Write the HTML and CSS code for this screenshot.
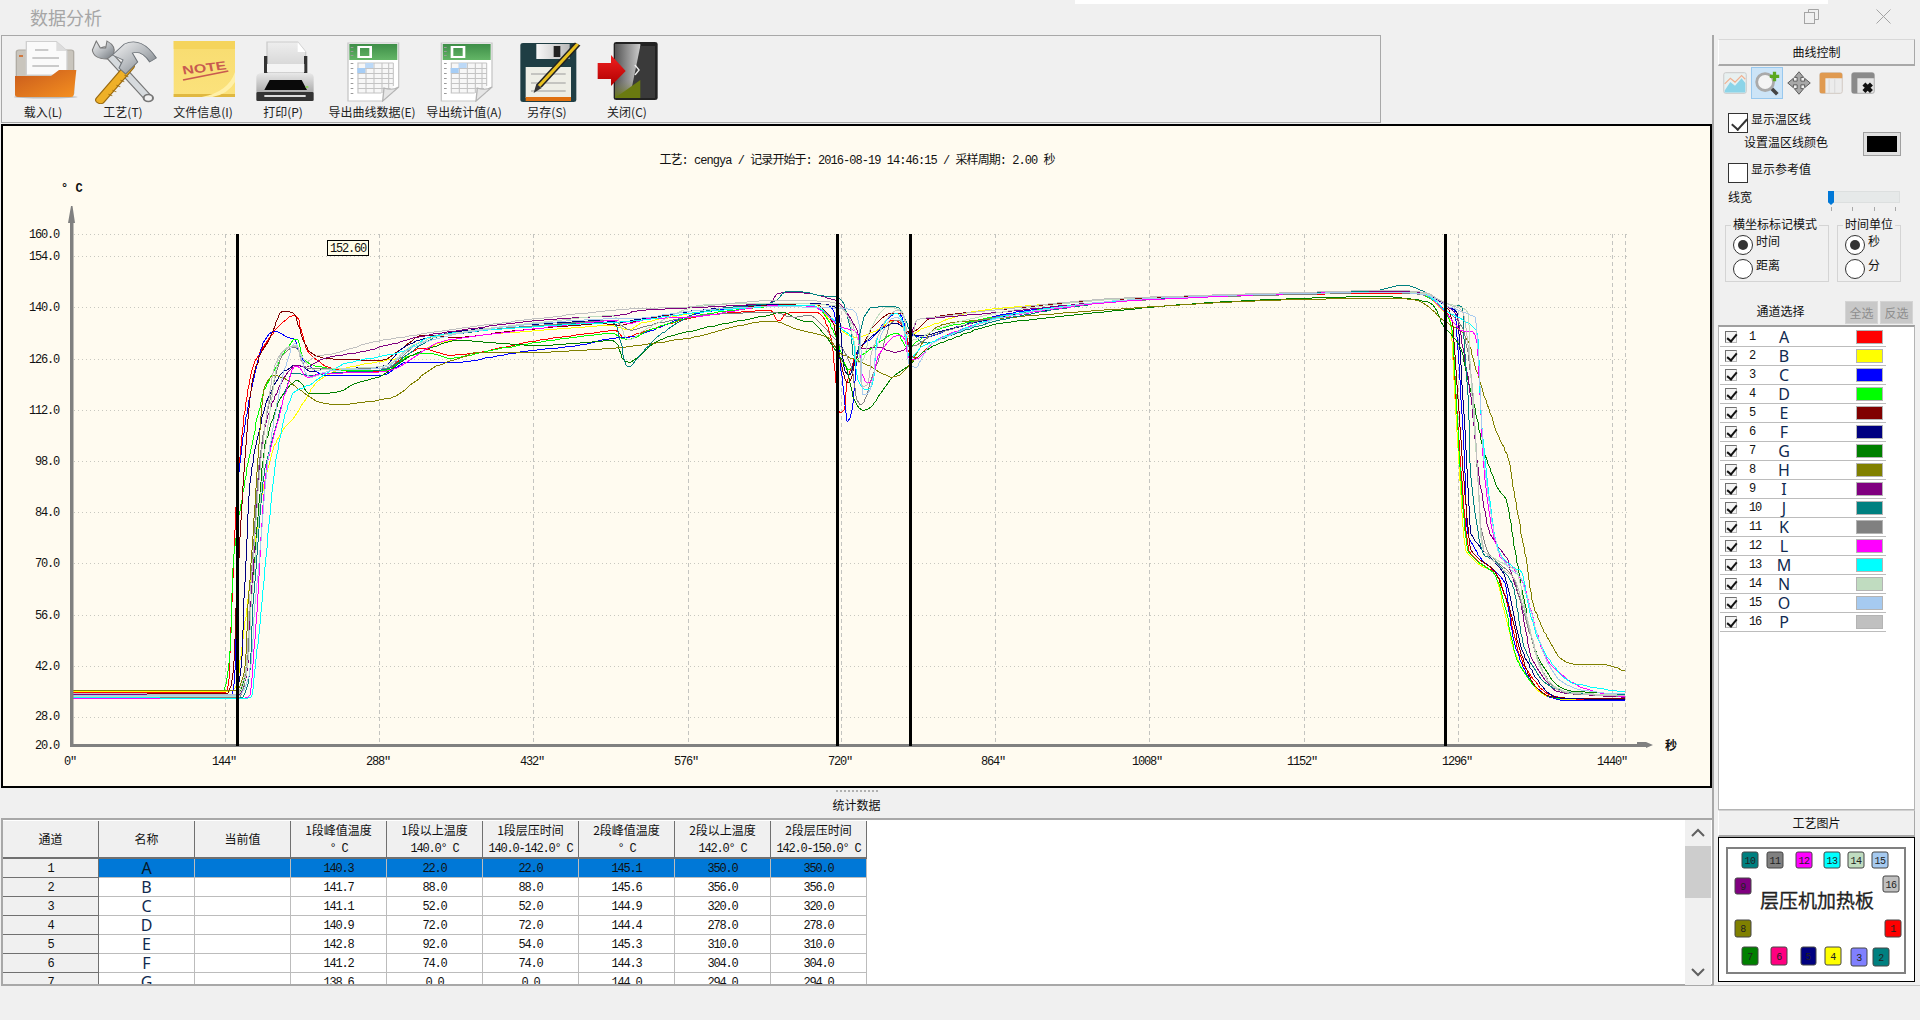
FILE: index.html
```html
<!DOCTYPE html>
<html lang="zh-CN">
<head>
<meta charset="utf-8">
<title>数据分析</title>
<link rel="stylesheet" href="styles.css">
</head>
<body>
<div class="app">
  <header class="titlebar">
    <div class="top-strip"></div>
    <span class="title">数据分析</span>
    <svg class="win-btn restore" viewBox="0 0 15 15"><path d="M4.5 3.5V.5h10v10h-4"/><rect x=".5" y="3.5" width="10" height="11"/></svg>
    <svg class="win-btn close" viewBox="0 0 15 15"><path d="M.5.5l14 14M14.5.5l-14 14"/></svg>
  </header>

  <main class="main">
    <section class="left">
      <nav class="toolbar">
        <div class="tool">
          <svg class="tool-icon" viewBox="2 38 60 66" preserveAspectRatio="none">
            <defs>
              <linearGradient id="gOrange" x1="0" y1="0" x2="1" y2="1"><stop offset="0" stop-color="#c85a1c"/><stop offset="1" stop-color="#f59020"/></linearGradient>
              <linearGradient id="gMetal" x1="0" y1="0" x2="1" y2="1"><stop offset="0" stop-color="#f4f4f4"/><stop offset=".5" stop-color="#b8bcc0"/><stop offset="1" stop-color="#70767c"/></linearGradient>
              <linearGradient id="gNote" x1="0" y1="0" x2="0" y2="1"><stop offset="0" stop-color="#f8dc70"/><stop offset="1" stop-color="#fbe27c"/></linearGradient>
              <linearGradient id="gPrinter" x1="0" y1="0" x2="0" y2="1"><stop offset="0" stop-color="#e8e8e8"/><stop offset="1" stop-color="#a4a4a4"/></linearGradient>
              <linearGradient id="gPaper" x1="0" y1="0" x2="0" y2="1"><stop offset="0" stop-color="#eeeeee"/><stop offset="1" stop-color="#cfcfcf"/></linearGradient>
              <linearGradient id="gGreen" x1="0" y1="0" x2="0" y2="1"><stop offset="0" stop-color="#3e8e48"/><stop offset="1" stop-color="#63b566"/></linearGradient>
              <linearGradient id="gDoor" x1="0" y1="0" x2="1" y2="0"><stop offset="0" stop-color="#555"/><stop offset="1" stop-color="#ccc"/></linearGradient>
              <linearGradient id="gDoorB" x1="0" y1="0" x2="0" y2="1"><stop offset="0" stop-color="#8a8a70" stop-opacity="0"/><stop offset="1" stop-color="#6a7a10"/></linearGradient>
              <linearGradient id="gRed" x1="0" y1="0" x2="0" y2="1"><stop offset="0" stop-color="#f02020"/><stop offset="1" stop-color="#b00000"/></linearGradient>
              <linearGradient id="gDisk" x1="0" y1="0" x2="1" y2="0"><stop offset="0" stop-color="#f8f8f8"/><stop offset="1" stop-color="#b8b8b8"/></linearGradient>
              <symbol id="sheet" viewBox="0 0 42 60">
                <path d="M1 1H39V45L27 59H1Z" fill="#fff" stroke="#c8c8c8"/>
                <rect x="2" y="2" width="36" height="16" fill="url(#gGreen)"/>
                <rect x="9" y="5" width="9" height="10" fill="none" stroke="#fff" stroke-width="2"/>
                <path d="M4 5v1M4 9v1M4 13v1M4 21v1M4 26v1M4 31v1M4 36v1M4 41v1M4 46v1M4 51v1" stroke="#9a9a9a" stroke-width="2"/>
                <rect x="8" y="21" width="27" height="30" fill="#f7f7f7"/>
                <path d="M8 21H35M8 26.500H35M8 31.500H35M8 36.500H35M8 41.500H35M8 46.500H33M8 51H26M8.500 21V51M14.500 21V51M20.500 21V51M26.500 21V51M31.500 21V46M35 21V44" stroke="#c4c4c4" fill="none" stroke-width=".8"/>
                <rect x="8" y="26" width="6" height="5" fill="#a6cdf5"/>
                <rect x="14" y="21" width="6" height="5" fill="#bcd9f7"/>
                <path d="M27 59L28 46Q34 49 39 45Z" fill="#e6e6e6" stroke="#b4b4b4"/>
              </symbol>
            </defs>
            <ellipse cx="34" cy="97" rx="24" ry="1.500" fill="#bbb"/>
            <rect x="12" y="50" width="43" height="45" rx="2" fill="#c9c5bd" stroke="#b0aca4"/>
            <rect x="14" y="55" width="3" height="2" fill="#d07840"/>
            <path d="M19.500 41.500H42L50 51V75H19.500Z" fill="#fafafa" stroke="#cfcfcf"/>
            <path d="M42 41.500V51H50Z" fill="#ddd"/>
            <path d="M26 50H36M24 58H44M24 66H44" stroke="#bbb" stroke-width="1.300"/>
            <path d="M11 76H38L44 70H57L55 95Q55 97 53 97H13Q11 97 11 95Z" fill="url(#gOrange)"/>
          </svg>
          <span class="tool-label">载入(L)</span>
        </div>
        <div class="tool">
          <svg class="tool-icon" viewBox="62 38 60 66" preserveAspectRatio="none">
            <path d="M78 50L111 98" stroke="#777" stroke-width="7" stroke-linecap="round"/>
            <path d="M78 50L111 98" stroke="#d6dadd" stroke-width="5" stroke-linecap="round"/>
            <path d="M72 41L69 50Q70 59 80 59L85 54Q87 46 80 41L79 48L75 48Z" fill="url(#gMetal)" stroke="#777" stroke-width=".8"/>
            <circle cx="111" cy="98" r="3.500" fill="#f0f0f0" stroke="#777" stroke-width="1.500"/>
            <path d="M97 66L75 100" stroke="#9a6a10" stroke-width="8" stroke-linecap="round"/>
            <path d="M97 66L75 100" stroke="#eeb028" stroke-width="6" stroke-linecap="round"/>
            <path d="M81 94l3 2M84 90l3 2M87 85l3 2M90 80l3 2M93 75l3 2" stroke="#9a6a10" stroke-width=".8"/>
            <path d="M84 55L93 44Q106 36 117 58L112 62Q106 50 99 53L103 62L94 74L89 68L92 60Z" fill="url(#gMetal)" stroke="#6c7278" stroke-width=".8"/>
          </svg>
          <span class="tool-label">工艺(T)</span>
        </div>
        <div class="tool">
          <svg class="tool-icon" viewBox="121 38 60 66" preserveAspectRatio="none">
            <rect x="129" y="41" width="46" height="56" fill="url(#gNote)"/>
            <rect x="129" y="41" width="46" height="8" fill="#f5d45c"/>
            <rect x="129" y="94" width="46" height="3" fill="#e0b840"/>
            <text class="note-text" x="152" y="72" transform="rotate(-9 152 68)">NOTE</text>
            <path d="M136 80L170 71" stroke="#c85a50" stroke-width="1.500"/>
            <path d="M150 97Q170 92 175 72V82Q170 94 158 97Z" fill="#fff0a8"/>
          </svg>
          <span class="tool-label">文件信息(I)</span>
        </div>
        <div class="tool">
          <svg class="tool-icon" viewBox="181 38 60 66" preserveAspectRatio="none">
            <path d="M199 42H222L228 52V74H199Z" fill="url(#gPaper)" stroke="#ccc"/>
            <path d="M222 42V52H228Z" fill="#fff"/>
            <path d="M198 56V74M228 56V74" stroke="#333" stroke-width="2.500"/>
            <rect x="199" y="64" width="28" height="8" fill="#f4f4f4"/>
            <rect x="191" y="73" width="43" height="22" rx="4" fill="url(#gPrinter)"/>
            <path d="M197 90L201 80H225L229 90Z" fill="#0a0a0a"/>
            <rect x="191" y="92" width="43" height="9" rx="1" fill="#333"/>
            <rect x="197" y="95" width="31" height="2" fill="#ddd"/>
            <rect x="228" y="86" width="2" height="2" fill="#8cd060"/>
          </svg>
          <span class="tool-label">打印(P)</span>
        </div>
        <div class="tool">
          <svg class="tool-icon" viewBox="247 38 60 66" preserveAspectRatio="none"><use href="#sheet" x="258" y="42" width="42" height="60"/></svg>
          <span class="tool-label">导出曲线数据(E)</span>
        </div>
        <div class="tool">
          <svg class="tool-icon" viewBox="315 38 60 66" preserveAspectRatio="none"><use href="#sheet" x="327" y="42" width="42" height="60"/></svg>
          <span class="tool-label">导出统计值(A)</span>
        </div>
        <div class="tool">
          <svg class="tool-icon" viewBox="378 38 60 66" preserveAspectRatio="none">
            <rect x="388" y="43" width="42" height="59" rx="2" fill="#1f3e44"/>
            <rect x="400" y="44" width="25" height="15" fill="url(#gDisk)"/>
            <rect x="413" y="46" width="5" height="11" fill="#222"/>
            <rect x="392" y="67" width="34" height="31" fill="#eeeee6"/>
            <path d="M396 74H422M396 83H422M396 91H422" stroke="#999" stroke-width="1"/>
            <rect x="392" y="97" width="34" height="4" fill="#e07010"/>
            <path d="M431 44L402 86" stroke="#222" stroke-width="5"/>
            <path d="M431 44L402 86" stroke="#e8c020" stroke-width="2.500"/>
            <path d="M400 84L404 88L398 93Z" fill="#333"/>
          </svg>
          <span class="tool-label">另存(S)</span>
        </div>
        <div class="tool">
          <svg class="tool-icon" viewBox="438 38 60 66" preserveAspectRatio="none">
            <rect x="458" y="42" width="33" height="58" rx="2" fill="#222"/>
            <path d="M459 44H478V98H459Z" fill="url(#gDoor)"/>
            <path d="M459 80H478V98H459Z" fill="url(#gDoorB)"/>
            <path d="M478 46H489V98H470Z" fill="#3a3a3a"/>
            <path d="M459 98L478 80V98Z" fill="#6a7a10"/>
            <path d="M474 65L477 70L474 75" stroke="#eee" fill="none" stroke-width="1.200"/>
            <path d="M446 63H456V55L467 71L456 86V79H446Z" fill="url(#gRed)"/>
          </svg>
          <span class="tool-label">关闭(C)</span>
        </div>
      </nav>

      <figure class="chart-panel">
        <svg class="chart" viewBox="3 126 1707 660">
          <text class="chart-title" x="857" y="164">工艺: cengya / 记录开始于: 2016-08-19 14:46:15 / 采样周期: 2.00 秒</text>
          <text class="unit" x="61" y="192">° C</text>

          <g class="grid-h">
            <path d="M74 234.500H1627M74 256.500H1627M74 307.500H1627M74 359.500H1627M74 410.500H1627M74 461.500H1627M74 512.500H1627M74 563.500H1627M74 615.500H1627M74 666.500H1627M74 717.500H1627"/>
          </g>
          <g class="grid-v">
            <path d="M225.500 234V745M379.500 234V745M533.500 234V745M688.500 234V745M841.500 234V745M995.500 234V745M1149.500 234V745M1304.500 234V745M1458.500 234V745M1612.500 234V745M1625.500 234V745"/>
          </g>

          <g class="axis-y">
            <text x="59" y="238">160.0</text><text x="59" y="260">154.0</text><text x="59" y="311">140.0</text><text x="59" y="363">126.0</text><text x="59" y="414">112.0</text><text x="59" y="465">98.0</text><text x="59" y="516">84.0</text><text x="59" y="567">70.0</text><text x="59" y="619">56.0</text><text x="59" y="670">42.0</text><text x="59" y="720">28.0</text><text x="59" y="749">20.0</text>
          </g>
          <g class="axis-x">
            <text x="70" y="765">0″</text><text x="224" y="765">144″</text><text x="378" y="765">288″</text><text x="532" y="765">432″</text><text x="686" y="765">576″</text><text x="840" y="765">720″</text><text x="993" y="765">864″</text><text x="1147" y="765">1008″</text><text x="1302" y="765">1152″</text><text x="1457" y="765">1296″</text><text x="1612" y="765">1440″</text>
          </g>

          <g class="curves">
            <polyline class="c01" points="72,692 226,692 230,640 235,520 239,465 243,423 250,377 257,358 270,337 283,322 295,315 300,327 307,350 317,360 328,367 350,371 387,371 400,360 420,348 433,351 447,355 480,352 540,340 600,332 615,330 625,338 640,333 700,316 770,310 778,321 787,313 817,312 830,335 835,375 840,413 847,383 858,350 873,337 893,320 905,330 908,350 916,358 940,338 1000,318 1100,303 1200,297 1300,294 1380,293 1423,294 1445,310 1450,320 1456,403 1462,487 1468,547 1480,563 1497,575 1508,607 1517,647 1527,670 1545,692 1565,698 1625,700"/>
            <polyline class="c02" points="72,691 230,691 240,660 250,580 258,520 265,480 277,440 297,413 313,387 327,375 350,367 387,360 413,355 440,343 480,335 540,330 610,325 628,330 645,322 700,312 770,303 813,303 830,320 845,333 857,337 873,332 897,320 908,337 920,330 967,313 1000,308 1100,300 1200,295 1300,293 1380,291 1423,295 1440,308 1450,320 1455,403 1460,487 1465,547 1477,563 1495,575 1503,607 1513,647 1523,670 1540,692 1560,699 1625,700"/>
            <polyline class="c03" points="72,695 232,695 236,600 238,480 250,395 263,343 275,331 287,337 295,340 303,360 317,372 327,375 383,375 407,362 460,362 520,352 580,345 612,338 640,335 700,313 770,305 813,303 833,310 840,363 847,422 852,410 858,350 873,337 897,313 908,333 927,337 1000,315 1100,302 1200,296 1300,293 1380,291 1423,293 1445,305 1455,313 1463,437 1467,530 1480,557 1493,570 1505,583 1513,637 1527,675 1543,693 1560,700 1625,700"/>
            <polyline class="c04" points="72,690 224,690 233,562 245,480 262,397 272,375 295,339 303,358 313,365 340,370 387,370 407,357 427,353 447,358 460,357 520,345 590,335 612,333 628,340 650,330 700,315 770,306 813,305 833,330 848,370 860,357 883,340 897,333 908,347 935,330 1000,316 1100,302 1200,296 1300,293 1380,292 1423,295 1445,312 1452,330 1456,403 1461,487 1467,547 1478,562 1495,575 1505,607 1514,650 1524,672 1541,692 1560,698 1625,698"/>
            <polyline class="c05" points="72,693 228,693 236,600 243,480 250,395 260,355 270,338 280,313 287,311 295,315 302,337 310,352 320,357 337,359 383,360 400,350 423,335 460,337 520,330 600,323 620,325 640,320 700,310 770,305 813,303 833,323 847,383 857,357 873,327 890,313 903,313 910,333 933,317 993,310 1100,300 1200,296 1300,293 1380,290 1423,293 1445,305 1452,320 1458,403 1464,487 1470,547 1480,560 1495,572 1510,610 1520,650 1533,683 1553,697 1625,698"/>
            <polyline class="c06" points="72,696 235,696 244,590 250,480 265,407 280,375 287,370 295,365 303,367 313,372 327,368 383,366 403,348 427,338 460,331 520,325 600,320 620,322 645,318 700,310 770,304 813,303 837,310 843,363 850,375 858,350 880,330 897,323 908,333 927,335 1000,317 1100,303 1200,296 1300,293 1380,291 1423,293 1445,305 1457,313 1465,437 1470,530 1480,547 1493,560 1505,577 1520,643 1533,673 1547,692 1560,698 1625,699"/>
            <polyline class="c07" points="72,694 238,694 250,610 263,457 278,403 288,388 297,380 303,385 308,393 337,392 357,383 383,375 407,358 433,347 460,340 540,345 612,340 628,362 660,340 700,329 733,322 770,315 783,312 800,320 813,322 830,342 847,370 853,397 862,410 873,405 890,380 907,367 930,348 967,333 1000,323 1100,312 1200,303 1300,298 1380,296 1430,303 1443,325 1460,347 1473,400 1483,447 1497,487 1507,503 1517,563 1533,643 1550,677 1567,690 1625,694"/>
            <polyline class="c08" points="72,690 238,690 248,600 257,467 263,393 273,375 287,380 307,395 323,403 347,404 393,397 413,383 433,368 460,358 480,352 540,352 612,348 640,345 700,336 733,327 770,321 800,330 827,337 840,353 857,360 873,368 893,377 908,367 917,353 937,327 977,320 1100,310 1224,302 1300,299 1380,298 1400,298 1423,303 1443,320 1463,333 1470,347 1480,382 1497,433 1508,458 1513,487 1526,560 1533,603 1547,637 1560,658 1573,664 1603,664 1625,671"/>
            <polyline class="c09" points="72,694 240,694 250,610 258,480 265,427 280,385 295,365 307,367 320,360 333,356 360,352 400,342 417,337 460,330 540,320 620,315 640,310 700,307 770,303 778,293 800,292 827,298 838,302 847,313 857,330 860,348 880,347 893,352 907,347 917,320 930,318 1000,312 1100,302 1200,296 1300,293 1380,291 1423,292 1445,305 1457,317 1470,393 1477,463 1485,513 1492,537 1508,560 1510,570 1520,600 1530,653 1543,677 1560,692 1625,697"/>
            <polyline class="c10" points="72,697 243,697 253,600 263,480 277,423 290,375 295,373 310,375 340,372 387,369 407,355 433,338 460,333 540,325 612,322 620,340 628,367 640,355 660,335 700,312 770,303 787,291 800,291 817,295 840,299 850,327 855,357 860,333 870,308 893,306 903,313 910,330 927,343 1000,320 1100,303 1200,296 1300,293 1380,290 1403,285 1423,291 1445,303 1453,305 1462,307 1463,330 1468,403 1470,470 1477,527 1483,553 1497,563 1513,587 1523,643 1537,673 1553,688 1580,693 1625,694"/>
            <polyline class="c11" points="72,697 240,697 250,590 258,473 267,413 280,360 295,347 307,368 333,368 387,368 400,358 427,338 460,332 540,325 612,320 630,330 650,325 700,315 770,312 793,317 810,315 833,337 850,363 860,405 870,383 883,347 897,320 910,347 933,335 1000,316 1100,303 1200,297 1300,294 1380,292 1423,295 1445,310 1462,327 1470,370 1475,437 1480,520 1487,550 1503,567 1513,577 1523,610 1537,657 1550,683 1567,693 1625,696"/>
            <polyline class="c12" points="72,698 245,698 250,695 256,620 265,477 280,413 290,377 297,366 307,377 327,373 387,371 407,362 433,345 460,338 540,328 612,320 630,323 650,318 700,316 772,305 813,306 840,327 857,333 867,383 880,353 900,335 913,360 940,338 1000,318 1100,303 1200,297 1300,293 1380,292 1423,294 1445,312 1460,330 1473,332 1477,347 1480,403 1483,460 1490,520 1500,557 1508,563 1523,583 1540,643 1553,667 1577,685 1597,692 1625,697"/>
            <polyline class="c13" points="72,697 248,698 252,695 260,620 273,480 283,423 293,393 303,388 313,383 327,373 347,363 387,355 407,350 427,338 460,332 540,326 612,322 640,320 700,312 770,306 813,305 843,330 853,340 867,390 877,340 897,313 910,358 925,345 1000,317 1100,302 1200,296 1300,293 1380,292 1423,293 1445,310 1463,320 1477,333 1480,403 1483,443 1492,520 1500,553 1513,567 1522,573 1537,637 1563,677 1587,686 1625,692"/>
            <polyline class="c14" points="72,696 238,696 252,590 263,467 275,373 283,352 295,345 303,358 315,370 340,368 387,365 413,345 460,332 540,322 612,315 628,340 645,330 700,305 770,303 840,307 853,337 860,363 870,330 887,307 903,313 910,340 943,327 1000,312 1100,300 1200,295 1300,293 1380,292 1423,293 1445,303 1460,307 1468,313 1470,370 1477,470 1482,547 1503,563 1517,572 1527,617 1540,667 1557,688 1587,693 1625,695"/>
            <polyline class="c15" points="72,695 240,695 255,600 267,467 280,387 290,352 295,343 302,360 310,377 333,370 385,367 413,347 460,333 540,323 612,318 640,318 700,310 770,306 813,307 853,310 860,337 863,395 877,347 897,317 908,363 917,367 933,343 1000,318 1100,302 1200,296 1300,293 1380,292 1423,294 1445,305 1470,315 1475,317 1478,353 1483,453 1490,510 1497,547 1508,567 1522,580 1537,633 1550,667 1567,685 1597,692 1625,693"/>
            <polyline class="c16" points="72,693 238,694 250,590 260,467 272,377 280,355 295,346 303,363 317,356 340,352 373,342 427,333 460,328 540,318 612,310 640,308 700,306 770,300 833,302 857,337 863,387 873,347 897,310 910,337 917,320 933,317 993,310 1100,299 1200,295 1300,292 1380,290 1423,292 1445,303 1463,313 1472,387 1478,487 1483,547 1500,567 1515,580 1527,620 1540,665 1555,688 1585,694 1625,695"/>
          </g>

          <path class="axis-shape" d="M70 745V223H68L71 206L72.500 206L75 223H73.500V744H1637V742H1646L1653 745L1646 748V747H70Z"/>
          <g class="markers">
            <path d="M237.500 234V746M837.500 234V746M910.500 234V746M1445.500 234V746"/>
          </g>
          <rect class="tip-box" x="327.500" y="240.500" width="41" height="15"/>
          <text class="tip-text" x="348" y="252">152.60</text>
          <text class="sec" x="1671" y="750">秒</text>
        </svg>
      </figure>

      <div class="stats-head">
        <span class="grip"></span>
        <span class="stats-title">统计数据</span>
      </div>

      <div class="table-wrap">
        <div class="table-clip">
          <table class="stats">
            <thead>
              <tr>
                <th><span class="cjk">通道</span></th>
                <th><span class="cjk">名称</span></th>
                <th><span class="cjk">当前值</span></th>
                <th><span class="cjk">1段峰值温度</span><span class="sub">° C</span></th>
                <th><span class="cjk">1段以上温度</span><span class="sub">140.0° C</span></th>
                <th><span class="cjk">1段层压时间</span><span class="sub">140.0-142.0° C</span></th>
                <th><span class="cjk">2段峰值温度</span><span class="sub">° C</span></th>
                <th><span class="cjk">2段以上温度</span><span class="sub">142.0° C</span></th>
                <th><span class="cjk">2段层压时间</span><span class="sub">142.0-150.0° C</span></th>
              </tr>
            </thead>
            <tbody>
              <tr class="selected"><th>1</th><td class="letter">A</td><td></td><td>140.3</td><td>22.0</td><td>22.0</td><td>145.1</td><td>350.0</td><td>350.0</td></tr>
              <tr><th>2</th><td class="letter">B</td><td></td><td>141.7</td><td>88.0</td><td>88.0</td><td>145.6</td><td>356.0</td><td>356.0</td></tr>
              <tr><th>3</th><td class="letter">C</td><td></td><td>141.1</td><td>52.0</td><td>52.0</td><td>144.9</td><td>320.0</td><td>320.0</td></tr>
              <tr><th>4</th><td class="letter">D</td><td></td><td>140.9</td><td>72.0</td><td>72.0</td><td>144.4</td><td>278.0</td><td>278.0</td></tr>
              <tr><th>5</th><td class="letter">E</td><td></td><td>142.8</td><td>92.0</td><td>54.0</td><td>145.3</td><td>310.0</td><td>310.0</td></tr>
              <tr><th>6</th><td class="letter">F</td><td></td><td>141.2</td><td>74.0</td><td>74.0</td><td>144.3</td><td>304.0</td><td>304.0</td></tr>
              <tr><th>7</th><td class="letter">G</td><td></td><td>138.6</td><td>0.0</td><td>0.0</td><td>144.0</td><td>294.0</td><td>294.0</td></tr>
            </tbody>
          </table>
        </div>
        <div class="scrollbar">
          <svg class="chev" viewBox="0 0 26 26"><path d="M7 16l6-6 6 6"/></svg>
          <div class="thumb"></div>
          <div class="track"></div>
          <svg class="chev" viewBox="0 0 26 26"><path d="M7 10l6 6 6-6"/></svg>
        </div>
      </div>
    </section>

    <aside class="side">
      <div class="side-head">曲线控制</div>
      <div class="icon-row">
        <button class="icon-btn">
          <svg viewBox="0 0 32 32"><rect x="4" y="5" width="24" height="22" rx="2" fill="#e8f0f0" stroke="#c8c8c8"/><path d="M5 24L11 15L16 19L23 11L27 16V26H5Z" fill="#8cd4e8"/><path d="M5 17L11 11L16 15L23 8L27 12" fill="none" stroke="#f0b090" stroke-width="1.300"/></svg>
        </button>
        <button class="icon-btn active">
          <svg viewBox="0 0 32 32"><path d="M19 20L27 28" stroke="#444" stroke-width="4"/><circle cx="14" cy="15" r="9" fill="#f4f4f4" stroke="#aaa" stroke-width="3"/><path d="M24 4v10M19 9h10" stroke="#5aa820" stroke-width="3.500"/></svg>
        </button>
        <button class="icon-btn">
          <svg viewBox="0 0 32 32"><path d="M16 4l5 6h-3v4h4v-3l6 5-6 5v-3h-4v4h3l-5 6-5-6h3v-4h-4v3l-6-5 6-5v3h4v-4h-3z" fill="#a8a8a8" stroke="#555"/></svg>
        </button>
        <button class="icon-btn">
          <svg viewBox="0 0 32 32"><rect x="4" y="5" width="24" height="22" rx="2" fill="#ececec" stroke="#d0c8c0"/><path d="M14 12v15M20 12v15" stroke="#d8d8d8"/><path d="M4 7Q4 5 6 5H26Q28 5 28 7V11H10V27H6Q4 27 4 25Z" fill="#e09a50"/></svg>
        </button>
        <button class="icon-btn">
          <svg viewBox="0 0 32 32"><rect x="4" y="5" width="24" height="22" rx="2" fill="#e4e4e4" stroke="#aaa"/><path d="M4 7Q4 5 6 5H26Q28 5 28 7V11H10V27H6Q4 27 4 25Z" fill="#8a8a8a"/><path d="M17 17l8 8M25 17l-8 8" stroke="#111" stroke-width="4.500"/></svg>
        </button>
      </div>

      <label class="check-row first"><span class="check on"></span>显示温区线</label>
      <div class="color-row"><span class="color-label">设置温区线颜色</span><span class="color-well"><span class="color-fill"></span></span></div>
      <label class="check-row second"><span class="check"></span>显示参考值</label>
      <div class="width-row">
        <span class="width-label">线宽</span>
        <div class="slider">
          <div class="slider-track"><span class="slider-thumb"></span></div>
          <div class="slider-ticks"><i></i><i></i><i></i><i></i></div>
        </div>
      </div>

      <div class="groups">
        <fieldset class="group mode">
          <legend>横坐标标记模式</legend>
          <label class="radio-row"><span class="radio on"></span>时间</label>
          <label class="radio-row"><span class="radio"></span>距离</label>
        </fieldset>
        <fieldset class="group unit-box">
          <legend>时间单位</legend>
          <label class="radio-row"><span class="radio on"></span>秒</label>
          <label class="radio-row"><span class="radio"></span>分</label>
        </fieldset>
      </div>

      <div class="channel-head">
        <span class="channel-title">通道选择</span>
        <span class="mini-btn">全选</span>
        <span class="mini-btn">反选</span>
      </div>
      <ul class="channels">
        <li><span class="cb"></span><span class="num">1</span><span class="name">A</span><span></span><span class="swatch s01"></span></li>
        <li><span class="cb"></span><span class="num">2</span><span class="name">B</span><span></span><span class="swatch s02"></span></li>
        <li><span class="cb"></span><span class="num">3</span><span class="name">C</span><span></span><span class="swatch s03"></span></li>
        <li><span class="cb"></span><span class="num">4</span><span class="name">D</span><span></span><span class="swatch s04"></span></li>
        <li><span class="cb"></span><span class="num">5</span><span class="name">E</span><span></span><span class="swatch s05"></span></li>
        <li><span class="cb"></span><span class="num">6</span><span class="name">F</span><span></span><span class="swatch s06"></span></li>
        <li><span class="cb"></span><span class="num">7</span><span class="name">G</span><span></span><span class="swatch s07"></span></li>
        <li><span class="cb"></span><span class="num">8</span><span class="name">H</span><span></span><span class="swatch s08"></span></li>
        <li><span class="cb"></span><span class="num">9</span><span class="name">I</span><span></span><span class="swatch s09"></span></li>
        <li><span class="cb"></span><span class="num">10</span><span class="name">J</span><span></span><span class="swatch s10"></span></li>
        <li><span class="cb"></span><span class="num">11</span><span class="name">K</span><span></span><span class="swatch s11"></span></li>
        <li><span class="cb"></span><span class="num">12</span><span class="name">L</span><span></span><span class="swatch s12"></span></li>
        <li><span class="cb"></span><span class="num">13</span><span class="name">M</span><span></span><span class="swatch s13"></span></li>
        <li><span class="cb"></span><span class="num">14</span><span class="name">N</span><span></span><span class="swatch s14"></span></li>
        <li><span class="cb"></span><span class="num">15</span><span class="name">O</span><span></span><span class="swatch s15"></span></li>
        <li><span class="cb"></span><span class="num">16</span><span class="name">P</span><span></span><span class="swatch s16"></span></li>
      </ul>

      <div class="side-head pic-head">工艺图片</div>
      <div class="pic-box">
        <svg class="pic" viewBox="1719 837 195 143">
          <rect class="pic-frame" x="1727" y="847" width="178" height="125"/>
          <text class="pic-title" x="1817" y="907">层压机加热板</text>
          <g class="pads">
            <rect class="pad s10f" x="1742" y="851" width="16" height="16" rx="2"/><text x="1750" y="863">10</text>
            <rect class="pad s11f" x="1767" y="851" width="16" height="16" rx="2"/><text x="1775" y="863">11</text>
            <rect class="pad s12f" x="1796" y="851" width="16" height="16" rx="2"/><text x="1804" y="863">12</text>
            <rect class="pad s13f" x="1824" y="851" width="16" height="16" rx="2"/><text x="1832" y="863">13</text>
            <rect class="pad s14f" x="1848" y="851" width="16" height="16" rx="2"/><text x="1856" y="863">14</text>
            <rect class="pad s15f" x="1872" y="851" width="16" height="16" rx="2"/><text x="1880" y="863">15</text>
            <rect class="pad s09f" x="1735" y="877" width="16" height="16" rx="2"/><text x="1743" y="889">9</text>
            <rect class="pad s16f" x="1883" y="875" width="16" height="16" rx="2"/><text x="1891" y="887">16</text>
            <rect class="pad s08f" x="1735" y="919" width="16" height="17" rx="2"/><text x="1743" y="931">8</text>
            <rect class="pad s01f" x="1885" y="919" width="16" height="17" rx="2"/><text x="1893" y="931">1</text>
            <rect class="pad s07f" x="1742" y="946" width="16" height="18" rx="2"/><text x="1750" y="959">7</text>
            <rect class="pad s06x" x="1771" y="946" width="16" height="18" rx="2"/><text x="1779" y="959">6</text>
            <rect class="pad s06f" x="1801" y="946" width="15" height="18" rx="2"/><text x="1808" y="959">5</text>
            <rect class="pad s02f" x="1825" y="946" width="16" height="18" rx="2"/><text x="1833" y="959">4</text>
            <rect class="pad s03x" x="1851" y="947" width="16" height="18" rx="2"/><text x="1859" y="960">3</text>
            <rect class="pad s10f" x="1873" y="947" width="16" height="18" rx="2"/><text x="1881" y="960">2</text>
          </g>
        </svg>
      </div>
    </aside>
  </main>
</div>
<script src="curves.js"></script>
</body>
</html>
```
FILE: styles.css
```css
* { box-sizing: border-box; }
html, body { margin: 0; padding: 0; height: 100%; }
body {
  background: #f0f0f0;
  color: #111;
  font: 12px "Noto Sans CJK SC", "Liberation Sans", sans-serif;
  overflow: hidden;
}
.app { width: 1920px; height: 1020px; display: flex; flex-direction: column; }

/* title bar */
.titlebar { position: relative; height: 35px; display: flex; align-items: center; padding: 0 29px 0 30px; flex: none; }
.top-strip { position: absolute; left: 1075px; top: 0; width: 753px; height: 4px; background: #fff; }
.title { font-size: 18px; line-height: 35px; color: #a6a6a6; margin-top: -1px; }
.win-btn { width: 15px; height: 15px; fill: #f0f0f0; stroke: #a4a4a4; stroke-width: 1; margin-top: -2px; }
.restore { margin-left: auto; }
.close { margin-left: 57px; }

.main { display: grid; grid-template-columns: 1712px 208px; flex: none; height: 951px; }
.left { padding-left: 1px; display: flex; flex-direction: column; }

/* toolbar */
.toolbar {
  width: 1380px; height: 88px; flex: none;
  border: 1px solid #a8a8a8;
  display: grid;
  grid-template-columns: 82px 78px 82px 78px 100px 84px 82px 78px;
  justify-content: start;
  padding-top: 2px;
}
.tool { display: flex; flex-direction: column; align-items: center; min-width: 0; }
.tool-icon { width: 80px; height: 66px; flex: none; }
.tool-label { font-size: 12px; line-height: 15px; white-space: nowrap; color: #222; }
.note-text { font: bold 12px "Liberation Sans", sans-serif; fill: #c85a50; text-anchor: middle; }

/* chart */
.chart-panel { margin: 1px 0 0; width: 1711px; height: 664px; border: 2px solid #000; background: #fffbf0; flex: none; }
.chart { display: block; width: 1707px; height: 660px; }
.chart text { font: 12px "Liberation Mono", "Noto Sans CJK SC", monospace; letter-spacing: -1.2px; fill: #111; }
.chart .chart-title { text-anchor: middle; letter-spacing: -.95px; }
.chart .unit { font-weight: bold; letter-spacing: 0; }
.chart .axis-y text { text-anchor: end; }
.chart .axis-x text { text-anchor: middle; }
.chart .tip-text { text-anchor: middle; }
.chart .sec { font: bold 12px "Noto Sans CJK SC", sans-serif; text-anchor: middle; letter-spacing: 0; }
.grid-h path { stroke: #c8c8c0; stroke-dasharray: 1 3; fill: none; }
.grid-v path { stroke: #c4c4c0; stroke-dasharray: 4 3; fill: none; }
.axis-shape { fill: #808080; }
.markers path { stroke: #000; stroke-width: 3; fill: none; }
.tip-box { fill: #fffde8; stroke: #000; }

.curves polyline { fill: none; stroke-width: 1; shape-rendering: crispEdges; }
.c01 { stroke: #ff0000; } .c02 { stroke: #ffff00; } .c03 { stroke: #0000ff; } .c04 { stroke: #00ff00; }
.c05 { stroke: #800000; } .c06 { stroke: #000080; } .c07 { stroke: #008000; } .c08 { stroke: #808000; }
.c09 { stroke: #800080; } .c10 { stroke: #008080; } .c11 { stroke: #808080; } .c12 { stroke: #ff00ff; }
.c13 { stroke: #00ffff; } .c14 { stroke: #c0dcc0; } .c15 { stroke: #a6caf0; } .c16 { stroke: #c0c0c0; }

/* stats */
.stats-head { height: 30px; flex: none; display: flex; flex-direction: column; align-items: center; }
.grip { width: 42px; height: 2px; margin: 2px 0 0; background: repeating-linear-gradient(90deg, #b0b0b0 0 2px, transparent 2px 4px); }
.stats-title { line-height: 16px; margin-top: 5px; }

.table-wrap {
  width: 1711px; height: 168px; flex: none;
  border-top: 2px solid #a8a8a8; border-bottom: 2px solid #a8a8a8; border-left: 2px solid #a8a8a8;
  background: #fff; display: flex; padding-top: 1px;
}
.table-clip { flex: 1; overflow: hidden; min-width: 0; }
.stats { border-collapse: separate; border-spacing: 0; table-layout: fixed; width: 864px; }
.stats th, .stats td {
  width: 96px; padding: 0; text-align: center; font-weight: normal;
  font-family: "Liberation Mono", "Noto Sans CJK SC", monospace; font-size: 12px; letter-spacing: -1.2px;
}
.stats thead th {
  height: 38px; background: #f0f0f0; border-right: 1px solid #707070; border-bottom: 2px solid #707070;
  line-height: 16px; color: #111;
}
.stats .cjk { display: block; font: 12px/18px "Noto Sans CJK SC", sans-serif; letter-spacing: 0; }
.stats .sub { display: block; line-height: 16px; margin-top: 2px; white-space: nowrap; }
.stats tbody th { height: 19px; padding-top: 1px; line-height: 16px; background: #f0f0f0; border-right: 1px solid #707070; border-bottom: 1px solid #707070; }
.stats tbody td { height: 19px; padding-top: 1px; line-height: 16px; border-right: 1px solid #bcbcbc; border-bottom: 1px solid #bcbcbc; }
.stats .selected td { background: #0078d7; }
.stats td.letter { font: 16px/17px "Noto Sans", sans-serif; letter-spacing: 0; color: #102a50; }
.stats .selected td.letter { color: #081828; }

.scrollbar { width: 26px; margin-right: 1px; background: #f0f0f0; display: flex; flex-direction: column; flex: none; margin-top: -1px; margin-bottom: -1px; }
.chev { width: 26px; height: 26px; flex: none; fill: none; stroke: #606060; stroke-width: 2; }
.thumb { height: 52px; background: #cdcdcd; flex: none; }
.track { flex: 1; }

/* side panel */
.side { border-left: 2px solid #a8a8a8; border-bottom: 1px solid #c4c4c4; height: 951px; padding: 4px 5px 0 4px; display: flex; flex-direction: column; }
.side-head {
  height: 27px; flex: none; text-align: center; line-height: 24px;
  border: 1px solid #d8d8d8; border-left-color: #fff; border-bottom: 2px solid #a8a8a8; border-right-color: #a8a8a8;
}
.icon-row { display: flex; height: 32px; margin: 1px 0 0 1px; flex: none; }
.icon-btn { width: 32px; height: 32px; padding: 0; border: 1px solid transparent; background: none; display: block; }
.icon-btn svg { display: block; width: 30px; height: 30px; }
.icon-btn.active { background: #cce4f7; border-color: #98c8ee; }

.check-row { display: flex; align-items: flex-start; gap: 3px; margin-left: 10px; height: 20px; line-height: 12px; flex: none; }
.check-row.first { margin-top: 14px; }
.check-row.second { margin-top: 7px; }
.check { width: 20px; height: 20px; border: 1px solid #333; background: #fff; position: relative; flex: none; }
.check.on::after {
  content: ""; position: absolute; left: 6px; top: 1px; width: 7px; height: 13px;
  border-right: 2px solid #333; border-bottom: 2px solid #333; transform: rotate(42deg);
}
.color-row { display: flex; align-items: flex-start; height: 24px; margin: -1px 14px 0 26px; flex: none; justify-content: space-between; }
.color-label { line-height: 20px; }
.color-well { width: 38px; height: 24px; background: #e0e0e0; border: 1px solid #a0a0a0; padding: 3px; display: block; }
.color-fill { display: block; width: 100%; height: 100%; background: #000; }
.width-row { display: flex; margin: 8px 0 0 10px; height: 22px; flex: none; }
.width-label { width: 100px; line-height: 12px; }
.slider { width: 72px; }
.slider-track { height: 12px; background: #e6e9e9; border: 1px solid #dcdfdf; }
.slider-thumb {
  display: block; width: 6px; height: 14px; background: #0078d7; margin-top: -1px; margin-left: -1px;
  clip-path: polygon(0 0, 100% 0, 100% 80%, 50% 100%, 0 80%);
}
.slider-ticks { display: flex; justify-content: space-between; padding: 4px 4px 0 3px; }
.slider-ticks i { width: 1px; height: 4px; background: #a8a8a8; display: block; }

.groups { display: flex; gap: 8px; margin: 3px 0 0 7px; flex: none; }
.group { margin: 0; padding: 1px 0 0 7px; border: 1px solid #d4d4d4; height: 66px; min-width: 0; }
.group legend { padding: 0 2px 3px; margin: 0 0 0 -2px; line-height: 15px; }
.mode { width: 104px; }
.unit-box { width: 64px; }
.radio-row { display: flex; align-items: flex-start; height: 24px; gap: 3px; line-height: 12px; }
.radio { width: 20px; height: 20px; border: 1px solid #333; border-radius: 50%; background: #fff; flex: none; position: relative; }
.radio.on::after { content: ""; position: absolute; left: 4px; top: 4px; width: 10px; height: 10px; border-radius: 50%; background: #333; }

.channel-head { display: flex; align-items: flex-start; height: 26px; margin-top: 17px; padding-top: 2px; gap: 2px; flex: none; }
.channel-title { width: 125px; text-align: center; line-height: 20px; }
.mini-btn { width: 33px; height: 23px; background: #c8c8c8; border: 1px solid #d4d4d4; color: #8e8e8e; text-align: center; line-height: 21px; }
.channels { list-style: none; margin: 0; padding: 1px 0 0 1px; height: 485px; flex: none; background: #fff; border: 1px solid #b4b4b4; border-top: 2px solid #a0a0a0; }
.channels li {
  display: grid; grid-template-columns: 24px 21px 28px 58px 27px; align-items: center;
  width: 166px; height: 19px; padding-left: 5px; border-bottom: 1px solid #bcbcbc;
}
.cb { width: 12px; height: 12px; border: 1px solid #b8b8b8; border-top-color: #707070; border-left-color: #707070; background: #f4f4f4; position: relative; display: block; }
.cb::after {
  content: ""; position: absolute; left: 3px; top: 0; width: 4px; height: 8px;
  border-right: 2px solid #111; border-bottom: 2px solid #111; transform: rotate(40deg);
}
.num { font: 12px "Liberation Mono", monospace; letter-spacing: -1.2px; }
.name { font: 16px/18px "Noto Sans", sans-serif; color: #102a50; text-align: center; }
.swatch { display: block; width: 27px; height: 14px; border: 1px solid #b4b4b4; }
.s01 { background: #ff0000; } .s02 { background: #ffff00; } .s03 { background: #0000ff; } .s04 { background: #00ff00; }
.s05 { background: #800000; } .s06 { background: #000080; } .s07 { background: #008000; } .s08 { background: #808000; }
.s09 { background: #800080; } .s10 { background: #008080; } .s11 { background: #808080; } .s12 { background: #ff00ff; }
.s13 { background: #00ffff; } .s14 { background: #c0dcc0; } .s15 { background: #a6caf0; } .s16 { background: #c0c0c0; }

.pic-head { margin-top: 0; border-top-color: #d0d0d0; line-height: 23px; }
.pic-box { height: 145px; flex: none; border: 1px solid #000; background: #fff; }
.pic { display: block; width: 195px; height: 143px; }
.pic-frame { fill: #fff; stroke: #808080; stroke-width: 2; }
.pic-title { font: 19px "Noto Sans CJK SC", sans-serif; text-anchor: middle; fill: #222; stroke: #222; stroke-width: .3; }
.pads text { font: 10px "Liberation Mono", monospace; text-anchor: middle; letter-spacing: -.5px; fill: #222; }
.pad { stroke: #444; stroke-width: 1; }
.s01f { fill: #ff0000; } .s02f { fill: #ffff00; } .s06f { fill: #000080; } .s07f { fill: #008000; }
.s08f { fill: #808000; } .s09f { fill: #800080; } .s10f { fill: #008080; } .s11f { fill: #808080; }
.s12f { fill: #ff00ff; } .s13f { fill: #00ffff; } .s14f { fill: #c0dcc0; } .s15f { fill: #a6caf0; }
.s16f { fill: #c0c0c0; } .s06x { fill: #ff0080; } .s03x { fill: #8080ff; }
```
FILE: curves.js
```js
// Smooths each logged channel through its sample points and snaps it to whole pixels.
function clamp(v, a, b) {
  return Math.min(Math.max(v, Math.min(a, b)), Math.max(a, b));
}
document.querySelectorAll('.curves polyline').forEach(function (line) {
  var pts = line.getAttribute('points').trim().split(/\s+/).map(function (p) {
    return p.split(',').map(Number);
  });
  var dist = function (a, b) { return Math.hypot(b[0] - a[0], b[1] - a[1]); };
  var out = [];
  var handle = function (i) {
    var a = pts[Math.max(i - 1, 0)], b = pts[Math.min(i + 1, pts.length - 1)];
    var d = dist(a, b) || 1;
    return [(b[0] - a[0]) / d, (b[1] - a[1]) / d];
  };
  for (var i = 0; i < pts.length - 1; i++) {
    var p0 = pts[i], p3 = pts[i + 1], len = dist(p0, p3);
    var t0 = handle(i), t1 = handle(i + 1);
    var h0 = Math.min(len, i > 0 ? dist(pts[i - 1], p0) : len) * 0.35;
    var h1 = Math.min(len, i + 2 < pts.length ? dist(p3, pts[i + 2]) : len) * 0.35;
    // Control points stay inside the segment's box, so a curve never overshoots its samples.
    var c1 = [clamp(p0[0] + t0[0] * h0, p0[0], p3[0]), clamp(p0[1] + t0[1] * h0, p0[1], p3[1])];
    var c2 = [clamp(p3[0] - t1[0] * h1, p0[0], p3[0]), clamp(p3[1] - t1[1] * h1, p0[1], p3[1])];
    var steps = Math.max(2, Math.ceil(len / 4));
    for (var s = 0; s < steps; s++) {
      var t = s / steps, u = 1 - t;
      var x = u * u * u * p0[0] + 3 * u * u * t * c1[0] + 3 * u * t * t * c2[0] + t * t * t * p3[0];
      var y = u * u * u * p0[1] + 3 * u * u * t * c1[1] + 3 * u * t * t * c2[1] + t * t * t * p3[1];
      out.push(Math.round(x) + ',' + Math.round(y));
    }
  }
  out.push(pts[pts.length - 1].join(','));
  line.setAttribute('points', out.join(' '));
});
```
